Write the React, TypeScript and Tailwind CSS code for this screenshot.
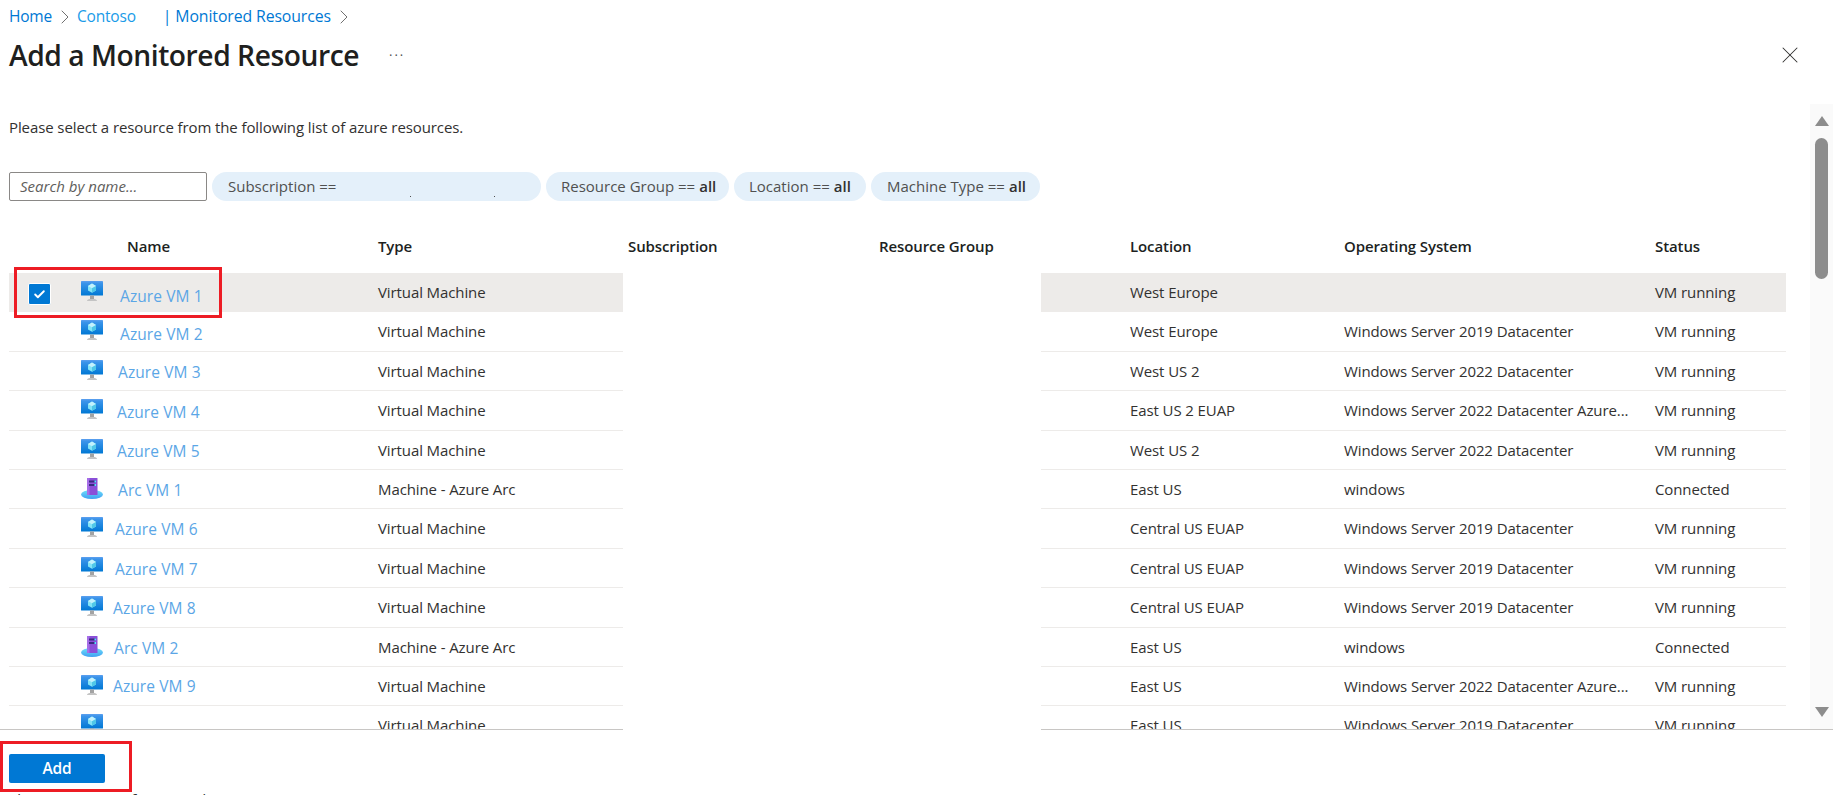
import { Check, ChevronRight, X } from 'lucide-react';

type Row = {
  name: string;
  kind: 'vm' | 'arc';
  type: string;
  location: string;
  os: string;
  status: string;
  nameClass: string;
};

const VM = 'Virtual Machine';
const ARC = 'Machine - Azure Arc';
const WS19 = 'Windows Server 2019 Datacenter';
const WS22 = 'Windows Server 2022 Datacenter';
const WS22A = 'Windows Server 2022 Datacenter Azure...';

const rows: Row[] = [
  { name: 'Azure VM 1', kind: 'vm', type: VM, location: 'West Europe', os: '', status: 'VM running', nameClass: 'ml-[17px] mt-[13px]' },
  { name: 'Azure VM 2', kind: 'vm', type: VM, location: 'West Europe', os: WS19, status: 'VM running', nameClass: 'ml-[17px] mt-[12px]' },
  { name: 'Azure VM 3', kind: 'vm', type: VM, location: 'West US 2', os: WS22, status: 'VM running', nameClass: 'ml-[15px] mt-[10px]' },
  { name: 'Azure VM 4', kind: 'vm', type: VM, location: 'East US 2 EUAP', os: WS22A, status: 'VM running', nameClass: 'ml-[14px] mt-[11px]' },
  { name: 'Azure VM 5', kind: 'vm', type: VM, location: 'West US 2', os: WS22, status: 'VM running', nameClass: 'ml-[14px] mt-[10px]' },
  { name: 'Arc VM 1', kind: 'arc', type: ARC, location: 'East US', os: 'windows', status: 'Connected', nameClass: 'ml-[15px] mt-[10px]' },
  { name: 'Azure VM 6', kind: 'vm', type: VM, location: 'Central US EUAP', os: WS19, status: 'VM running', nameClass: 'ml-[12px] mt-[10px]' },
  { name: 'Azure VM 7', kind: 'vm', type: VM, location: 'Central US EUAP', os: WS19, status: 'VM running', nameClass: 'ml-[12px] mt-[10px]' },
  { name: 'Azure VM 8', kind: 'vm', type: VM, location: 'Central US EUAP', os: WS19, status: 'VM running', nameClass: 'ml-[10px] mt-[10px]' },
  { name: 'Arc VM 2', kind: 'arc', type: ARC, location: 'East US', os: 'windows', status: 'Connected', nameClass: 'ml-[11px] mt-[10px]' },
  { name: 'Azure VM 9', kind: 'vm', type: VM, location: 'East US', os: WS22A, status: 'VM running', nameClass: 'ml-[10px] mt-[9px]' },
  { name: '', kind: 'vm', type: VM, location: 'East US', os: WS19, status: 'VM running', nameClass: 'ml-[10px] mt-[9px]' },
];

function VmIcon() {
  return (
    <svg width="22" height="20" viewBox="0 0 22 20" className="shrink-0">
      <defs>
        <linearGradient id="vmScreen" x1="0" y1="0" x2="0" y2="1">
          <stop offset="0" stopColor="#5ea0ef" />
          <stop offset="0.15" stopColor="#3b94ea" />
          <stop offset="1" stopColor="#0078d4" />
        </linearGradient>
      </defs>
      <rect x="0" y="0" width="22" height="14.5" rx="0.6" fill="url(#vmScreen)" />
      <path d="M11 2.6 15 4.9 15 9.5 11 11.8 7 9.5 7 4.9Z" fill="#83e4f7" />
      <path d="M11 2.6 15 4.9 11 7.2 7 4.9Z" fill="#c3f1fc" />
      <path d="M11 7.2 15 4.9 15 9.5 11 11.8Z" fill="#50c7e8" />
      <rect x="9" y="14.5" width="4" height="3.5" fill="#a3a3a3" />
      <path d="M6 20 C6 18.4 8 18 9 18 L13 18 C14 18 16 18.4 16 20Z" fill="#c4c4c4" />
    </svg>
  );
}

function ArcIcon() {
  return (
    <svg width="22" height="21" viewBox="0 0 22 21" className="shrink-0">
      <defs>
        <linearGradient id="arcDisc" x1="0" y1="0" x2="0" y2="1">
          <stop offset="0" stopColor="#6fe0fa" />
          <stop offset="1" stopColor="#3f9ff2" />
        </linearGradient>
      </defs>
      <ellipse cx="11" cy="16.5" rx="11" ry="4.5" fill="url(#arcDisc)" />
      <rect x="6" y="0" width="10.5" height="17" rx="0.5" fill="#8a4fd8" />
      <rect x="6" y="0" width="2.5" height="17" fill="#a66ee8" />
      <rect x="8" y="2.5" width="7" height="2" fill="#3b2a80" />
      <rect x="8" y="6" width="7" height="2" fill="#3b2a80" />
      <rect x="13.5" y="2.5" width="1.5" height="2" fill="#50e6ff" />
      <rect x="13.5" y="6" width="1.5" height="2" fill="#50e6ff" />
    </svg>
  );
}

function Pill({ label, value, className }: { label: string; value: string; className: string }) {
  return (
    <div className={`flex h-[29px] items-center whitespace-nowrap rounded-full bg-[#e4f0fa] tracking-[0px] text-[#505050] ${className}`}>
      <span>{label}</span>
      <span className="ml-1 font-semibold text-[#323130]">{value}</span>
    </div>
  );
}

function TableRow({ row, index }: { row: Row; index: number }) {
  const selected = index === 0;
  const cellBg = selected ? 'bg-[#edebe9]' : 'border-b border-[#edebe9]';
  return (
    <div className="flex h-[39.4px] shrink-0">
      <div className={`flex w-[614px] shrink-0 ${cellBg}`}>
        <div className="flex w-[72px] shrink-0 items-start pl-[19px] pt-[10px]">
          {selected && (
            <div className="flex h-[22px] w-[23px] items-center justify-center rounded-[2px] border border-white bg-[#0078d4]">
              <Check size={13} strokeWidth={3.5} className="text-white" />
            </div>
          )}
        </div>
        <div className="flex w-[297px] shrink-0 items-start">
          <div className="mt-[8px] shrink-0">{row.kind === 'vm' ? <VmIcon /> : <ArcIcon />}</div>
          <span className={`text-[15.5px] leading-[20px] tracking-[0.1px] text-[#5ba6e6] ${row.nameClass}`}>{row.name}</span>
        </div>
        <div className="pt-[9px] leading-[20px]">{row.type}</div>
      </div>
      <div className="w-[418px] shrink-0" />
      <div className={`flex w-[745px] shrink-0 pt-[9px] leading-[20px] ${cellBg}`}>
        <div className="w-[303px] shrink-0 pl-[89px]">{row.location}</div>
        <div className="w-[311px] shrink-0 whitespace-nowrap">{row.os}</div>
        <div>{row.status}</div>
      </div>
    </div>
  );
}

export default function App() {
  return (
    <div className="relative flex h-[795px] w-full flex-col overflow-hidden bg-white font-['Open_Sans','Liberation_Sans',sans-serif] text-[15px] text-[#323130] tracking-[-0.1px]">
      <div className="flex h-[32px] shrink-0 items-center pl-[9px] pt-[1px] text-[15.5px] tracking-[-0.2px]">
        <span className="text-[#0078d4]">Home</span>
        <ChevronRight size={24} strokeWidth={1} className="ml-[1px] text-[#707070]" />
        <span className="text-[#1a9be8]">Contoso</span>
        <span className="ml-[27px] text-[15.8px] tracking-[-0.1px] text-[#0078d4]">| Monitored Resources</span>
        <ChevronRight size={24} strokeWidth={1} className="ml-[1px] text-[#707070]" />
      </div>

      <div className="flex h-[46px] shrink-0 items-center pl-[9px] pr-[29px]">
        <h1 className="text-[28.2px] font-semibold tracking-[-0.45px] text-[#201f1e]">Add a Monitored Resource</h1>
        <span className="ml-[30px] pb-[6px] text-[13px] tracking-[2px] text-[#505050]">...</span>
        <X size={28} strokeWidth={0.9} className="ml-auto text-[#323130]" />
      </div>

      <div className="flex min-h-0 flex-1 pt-[39px]">
        <div className="flex min-w-0 flex-1 flex-col overflow-hidden pl-[9px]">
          <p className="h-[20px] leading-[20px]">Please select a resource from the following list of azure resources.</p>

          <div className="mt-[35px] flex shrink-0 items-center gap-[5px]">
            <div className="flex h-[29px] w-[198px] items-center rounded-[2px] border border-[#8a8886] pl-[10px] italic tracking-[0px] text-[#605e5c]">
              Search by name...
            </div>
            <div className="relative flex h-[29px] w-[329px] items-center rounded-full bg-[#e4f0fa] pl-[16px] tracking-[0px] text-[#505050]">
              Subscription ==
              <span className="absolute bottom-[4px] left-[198px] h-[1px] w-[1px] bg-[#505050]" />
              <span className="absolute bottom-[4px] left-[282px] h-[1px] w-[1px] bg-[#505050]" />
            </div>
            <Pill label="Resource Group ==" value="all" className="w-[183px] pl-[15px]" />
            <Pill label="Location ==" value="all" className="w-[132px] pl-[15px]" />
            <Pill label="Machine Type ==" value="all" className="w-[169px] pl-[16px]" />
          </div>

          <div className="mt-[27px] flex h-[45px] shrink-0 pt-[8px] font-semibold leading-[20px] text-[#201f1e]">
            <div className="w-[369px] shrink-0 pl-[118px]">Name</div>
            <div className="w-[250px] shrink-0">Type</div>
            <div className="w-[251px] shrink-0">Subscription</div>
            <div className="w-[251px] shrink-0">Resource Group</div>
            <div className="w-[214px] shrink-0">Location</div>
            <div className="w-[311px] shrink-0">Operating System</div>
            <div>Status</div>
          </div>

          <div className="flex min-h-0 flex-1 flex-col overflow-hidden">
            {rows.map((row, i) => (
              <TableRow key={i} row={row} index={i} />
            ))}
          </div>
        </div>

        <div className="mt-[-13px] flex w-[23px] shrink-0 flex-col items-center bg-[#fafafa] pt-[12px]">
          <div className="h-0 w-0 border-x-[7px] border-b-[10px] border-x-transparent border-b-[#8d8d8d]" />
          <div className="mt-[12px] h-[141px] w-[13px] rounded-full bg-[#8d8d8d]" />
          <div className="mt-auto mb-[12px] h-0 w-0 border-x-[7px] border-t-[10px] border-x-transparent border-t-[#8d8d8d]" />
        </div>
      </div>

      <div className="flex h-[1px] shrink-0">
        <div className="w-[623px] shrink-0 bg-[#c8c6c4]" />
        <div className="w-[418px] shrink-0" />
        <div className="flex-1 bg-[#c8c6c4]" />
      </div>

      <div className="h-[65px] shrink-0 pl-[9px] pt-[24px]">
        <button className="flex h-[29px] w-[96px] items-center justify-center rounded-[2px] bg-[#0078d4] text-[15.5px] font-semibold text-white">
          Add
        </button>
        <p className="mt-[6px] leading-[20px] text-[#323130]">Showing 1 to 50 of 50 records</p>
      </div>

      {/* red callouts drawn on top of the screenshot */}
      <div className="absolute left-[14px] top-[267px] h-[51px] w-[208px] border-[3px] border-[#ed1c24]" />
      <div className="absolute left-0 top-[741px] h-[51px] w-[132px] border-[3px] border-[#ed1c24]" />
    </div>
  );
}
